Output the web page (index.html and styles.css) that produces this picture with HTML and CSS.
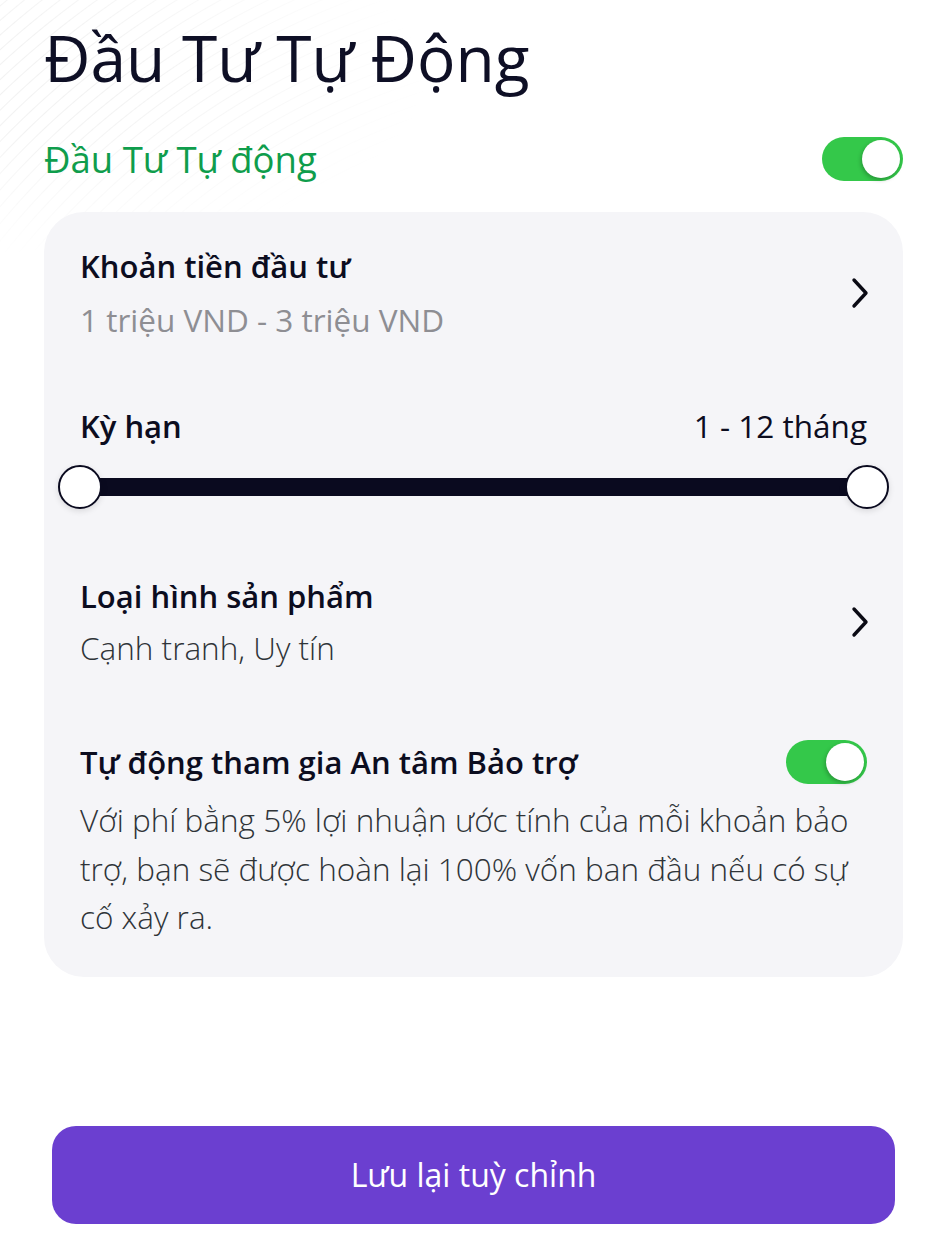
FILE: index.html
```html
<!DOCTYPE html>
<html>
<head>
	<title>Đầu Tư Tự Động</title>
	<meta charset="UTF-8">
	<meta name="viewport" content="width=device-width, initial-scale=1">
	<link rel="stylesheet" href="styles.css">
</head>
<body>
	<div class="bg-waves"></div>
	<div class="page">
		<h1 class="title">Đầu Tư Tự Động</h1>

		<div class="auto-row">
			<span class="auto-label">Đầu Tư Tự động</span>
			<span class="switch on"><span class="knob"></span></span>
		</div>

		<div class="card">
			<div class="item">
				<div>
					<div class="label">Khoản tiền đầu tư</div>
					<div class="value muted">1 triệu VND - 3 triệu VND</div>
				</div>
				<svg class="chevron" width="18" height="32" viewBox="0 0 18 32">
					<path d="M3 3 L15 16 L3 29" fill="none" stroke="#0a0a14" stroke-width="3.4" stroke-linecap="round" stroke-linejoin="round"/>
				</svg>
			</div>

			<div class="term">
				<div class="term-head">
					<span class="label">Kỳ hạn</span>
					<span class="term-value">1 - 12 tháng</span>
				</div>
				<div class="range">
					<div class="track"></div>
					<span class="thumb left"></span>
					<span class="thumb right"></span>
				</div>
			</div>

			<div class="item product">
				<div>
					<div class="label">Loại hình sản phẩm</div>
					<div class="value light">Cạnh tranh, Uy tín</div>
				</div>
				<svg class="chevron" width="18" height="32" viewBox="0 0 18 32">
					<path d="M3 3 L15 16 L3 29" fill="none" stroke="#0a0a14" stroke-width="3.4" stroke-linecap="round" stroke-linejoin="round"/>
				</svg>
			</div>

			<div class="protect">
				<div class="protect-head">
					<span class="label">Tự động tham gia An tâm Bảo trợ</span>
					<span class="switch on"><span class="knob"></span></span>
				</div>
				<p class="desc">Với phí bằng 5% lợi nhuận ước tính của mỗi khoản bảo trợ, bạn sẽ được hoàn lại 100% vốn ban đầu nếu có sự cố xảy ra.</p>
			</div>
		</div>

		<button class="btn-save">Lưu lại tuỳ chỉnh</button>
	</div>
</body>
</html>
```

FILE: styles.css
```css
* {
	margin: 0;
	padding: 0;
	box-sizing: border-box;
}

html, body {
	width: 100%;
	height: 100%;
	background: #ffffff;
}

body {
	font-family: "Open Sans", "Noto Sans", sans-serif;
	color: #0c0d1f;
	position: relative;
	overflow: hidden;
}

.bg-waves {
	position: absolute;
	left: 0;
	top: 0;
	width: 440px;
	height: 260px;
	background: repeating-radial-gradient(circle at 640px 760px, transparent 0, transparent 9px, rgba(0,0,0,0.05) 10px, transparent 11px);
	-webkit-mask-image: radial-gradient(ellipse at 0 30%, #000 20%, transparent 70%);
	mask-image: radial-gradient(ellipse at 0 30%, #000 20%, transparent 70%);
}

.page {
	position: relative;
	padding: 20px 38px 0 44px;
}

.title {
	font-size: 64px;
	font-weight: 400;
	line-height: 76px;
	color: #0e0f25;
}

.auto-row {
	display: flex;
	align-items: center;
	justify-content: space-between;
	margin-top: 41px;
}

.auto-label {
	font-size: 36.5px;
	line-height: 44px;
	color: #0f9d4c;
}

.switch {
	display: inline-block;
	position: relative;
	width: 81px;
	height: 44px;
	border-radius: 22px;
	background: #34c84a;
	flex-shrink: 0;
}

.switch .knob {
	position: absolute;
	top: 3px;
	right: 3px;
	width: 38px;
	height: 38px;
	border-radius: 50%;
	background: #ffffff;
	box-shadow: -1px 2px 4px rgba(0,0,0,0.25);
}

.card {
	margin-top: 31px;
	background: #f5f5f8;
	border-radius: 40px;
	padding: 33px 36px 35px 36px;
}

.item {
	display: flex;
	align-items: center;
	justify-content: space-between;
}

.chevron {
	margin-right: -2px;
}

.label {
	font-size: 31px;
	font-weight: 600;
	line-height: 42px;
	color: #0c0d1f;
}

.value {
	font-size: 31.5px;
	line-height: 42px;
	margin-top: 12px;
}

.muted {
	color: #8e8e93;
	font-weight: 400;
}

.light {
	color: #2f3438;
	font-weight: 300;
	margin-top: 10px;
}

.term {
	margin-top: 64px;
}

.term-head {
	display: flex;
	justify-content: space-between;
	align-items: baseline;
}

.term-value {
	font-size: 31.5px;
	line-height: 42px;
	color: #0c0d1f;
}

.range {
	position: relative;
	height: 44px;
	margin-top: 18px;
	display: flex;
	align-items: center;
}

.track {
	width: 100%;
	height: 18px;
	background: #0a0a1f;
}

.thumb {
	position: absolute;
	top: 0;
	width: 44px;
	height: 44px;
	border-radius: 50%;
	background: #ffffff;
	border: 2px solid #0a0a1f;
	box-shadow: 0 2px 6px rgba(0,0,0,0.12);
}

.thumb.left {
	left: -22px;
}

.thumb.right {
	right: -22px;
}

.product {
	margin-top: 66px;
}

.protect {
	margin-top: 71px;
}

.protect-head {
	display: flex;
	align-items: center;
	justify-content: space-between;
}

.desc {
	margin-top: 12px;
	font-size: 31.5px;
	font-weight: 300;
	line-height: 48.5px;
	color: #2f3438;
}

.btn-save {
	display: block;
	width: calc(100% - 16px);
	margin: 149px 8px 0;
	height: 98px;
	border: none;
	border-radius: 24px;
	background: #6b3fd0;
	color: #ffffff;
	font-family: "Open Sans", "Noto Sans", sans-serif;
	font-size: 32px;
	font-weight: 400;
}
```
